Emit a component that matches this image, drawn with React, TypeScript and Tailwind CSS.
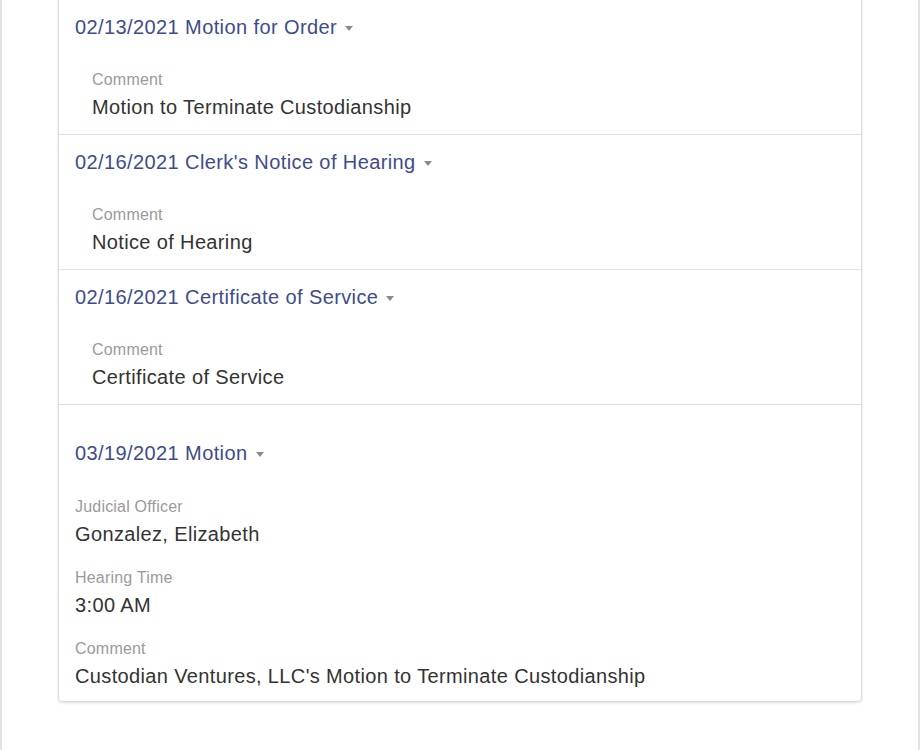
import React from 'react'

type Field = { label: string; value: string }
type Entry = { date: string; title: string; fields: Field[]; hearing?: boolean }

const entries: Entry[] = [
  { date: '02/13/2021', title: 'Motion for Order', fields: [{ label: 'Comment', value: 'Motion to Terminate Custodianship' }] },
  { date: '02/16/2021', title: "Clerk's Notice of Hearing", fields: [{ label: 'Comment', value: 'Notice of Hearing' }] },
  { date: '02/16/2021', title: 'Certificate of Service', fields: [{ label: 'Comment', value: 'Certificate of Service' }] },
  {
    date: '03/19/2021',
    title: 'Motion',
    hearing: true,
    fields: [
      { label: 'Judicial Officer', value: 'Gonzalez, Elizabeth' },
      { label: 'Hearing Time', value: '3:00 AM' },
      { label: 'Comment', value: "Custodian Ventures, LLC's Motion to Terminate Custodianship" },
    ],
  },
]

function Caret() {
  return (
    <span className="ml-[8px] inline-block h-0 w-0 border-x-[4px] border-t-[5px] border-x-transparent border-t-[#8a8a8a] align-middle" />
  )
}

function FieldRow({ field }: { field: Field }) {
  return (
    <div className="flex flex-col gap-[2px]">
      <div className="text-[16px] leading-[22px] tracking-[0.2px] text-[#9a9a9a]">{field.label}</div>
      <div className="text-[20px] leading-[28px] tracking-[0.36px] text-[#333]">{field.value}</div>
    </div>
  )
}

export default function App() {
  return (
    <div className="h-[750px] w-[920px] overflow-hidden border-x-2 border-[#e3e3e3] bg-white font-['Liberation_Sans',Arial,sans-serif]">
      <div className="-mt-px ml-[56px] w-[804px] rounded-b-[4px] border border-[#dcdcdc] bg-white shadow-[0_1px_3px_rgba(0,0,0,0.12)]">
        {entries.map((e, i) => (
          <div
            key={i}
            className={`${i > 0 ? 'border-t border-[#e2e2e2]' : ''} ${e.hearing ? 'pt-[34px] pb-[11px]' : 'pt-[13px] pb-[13px]'} px-4`}
          >
            <div className="text-[20px] leading-[28px] tracking-[0.4px] text-[#3d4c8c]">
              {e.date} {e.title}
              <Caret />
            </div>
            {e.hearing ? (
              <div className="mt-[29px] flex flex-col gap-[19px]">
                {e.fields.map((f, j) => (
                  <FieldRow key={j} field={f} />
                ))}
              </div>
            ) : (
              <div className="mt-[28px] pl-[17px]">
                {e.fields.map((f, j) => (
                  <FieldRow key={j} field={f} />
                ))}
              </div>
            )}
          </div>
        ))}
      </div>
    </div>
  )
}
